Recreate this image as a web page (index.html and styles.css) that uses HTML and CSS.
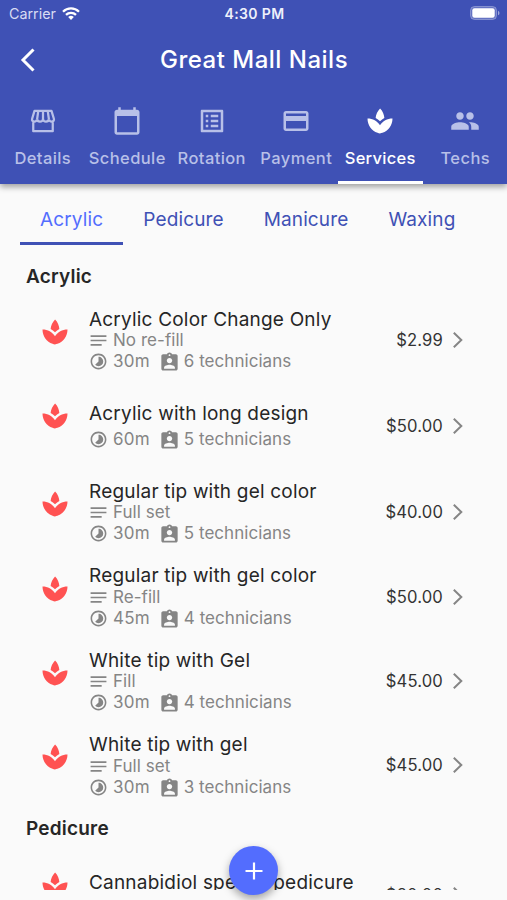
FILE: index.html
```html
<!DOCTYPE html>
<html lang="en">
<head>
<meta charset="utf-8">
<title>Great Mall Nails</title>
<link rel="stylesheet" href="styles.css">
</head>
<body>
<svg class="defs" aria-hidden="true">
  <symbol id="spa" viewBox="0 0 24 24"><path d="M15.49 9.63c-.18-2.79-1.31-5.51-3.43-7.63-2.14 2.14-3.32 4.86-3.55 7.63 1.28.68 2.46 1.56 3.49 2.63 1.03-1.06 2.21-1.94 3.49-2.63zM12 15.45C9.85 12.17 6.18 10 2 10c0 5.32 3.36 9.82 8.03 11.49.63.23 1.29.4 1.97.51.68-.12 1.33-.29 1.97-.51C18.64 19.82 22 15.32 22 10c-4.18 0-7.85 2.17-10 5.45z"/></symbol>
  <symbol id="notes" viewBox="0 0 24 24"><path d="M2 18.500h14v-2H2v2zM2 5.500v2h20v-2H2zm0 7.500h20v-2H2v2z"/></symbol>
  <symbol id="time" viewBox="0 0 24 24"><path d="M16.24 7.76C15.07 6.59 13.54 6 12 6v6l-4.24 4.24c2.34 2.34 6.14 2.34 8.49 0 2.34-2.34 2.34-6.14-.01-8.48zM12 2C6.48 2 2 6.48 2 12s4.48 10 10 10 10-4.48 10-10S17.52 2 12 2zm0 18c-4.42 0-8-3.58-8-8s3.58-8 8-8 8 3.58 8 8-3.58 8-8 8z"/></symbol>
  <symbol id="badge" viewBox="1.500 .5 21 21"><path d="M19 3h-4.180C14.400 1.840 13.300 1 12 1s-2.400.84-2.820 2H5c-1.100 0-2 .9-2 2v14c0 1.100.9 2 2 2h14c1.100 0 2-.9 2-2V5c0-1.100-.9-2-2-2zm-7 0c.55 0 1 .45 1 1s-.45 1-1 1-1-.45-1-1 .45-1 1-1zm0 4c1.660 0 3 1.340 3 3s-1.340 3-3 3-3-1.340-3-3 1.340-3 3-3zm6 12H6v-1.400c0-2 4-3.100 6-3.100s6 1.100 6 3.100V19z"/></symbol>
  <symbol id="next" viewBox="0 0 12 18"><path d="M1.800 1.800 9.300 9 1.800 16.200" fill="none" stroke="currentColor" stroke-width="2"/></symbol>
</svg>
<div class="app">
  <header class="appbar">
    <div class="status">
      <div class="carrier">Carrier
        <svg class="wifi" viewBox="0 0 18 13"><g fill="none" stroke="currentColor" stroke-width="2.3"><path d="M1 4.700a11.400 11.400 0 0 1 16 0"/><path d="M4 7.900a7.100 7.100 0 0 1 10 0"/></g><path fill="currentColor" d="M9 13 6.200 10.100a4 4 0 0 1 5.600 0z"/></svg>
      </div>
      <div class="clock">4:30 PM</div>
      <svg class="battery" viewBox="0 0 30 14"><rect x=".5" y=".5" width="26" height="13" rx="4" fill="#fff" fill-opacity=".2" stroke="#fff" stroke-opacity=".3"/><rect x="2.300" y="2.300" width="22.400" height="9.400" rx="2.200" fill="#fff"/><path d="M28 4.700a2.500 2.500 0 0 1 0 4.600z" fill="#fff" fill-opacity=".5"/></svg>
    </div>
    <div class="titlebar">
      <svg class="back" viewBox="0 0 16 24"><path d="M13.500 1.500 3 12l10.500 10.500" fill="none" stroke="currentColor" stroke-width="3"/></svg>
      <h1>Great Mall Nails</h1>
    </div>
    <nav class="tabs">
      <a class="tab"><svg viewBox="0 0 24 24"><path d="M5.200 3.900h13.600l1.900 6.300c.4 1.300-.5 2.300-1.600 2.300-1.200 0-2.200-.8-2.400-2-.1 1.200-1.100 2-2.300 2-1.300 0-2.400-1-2.400-2.200 0 1.200-1.100 2.200-2.400 2.200-1.200 0-2.200-.8-2.300-2-.2 1.200-1.200 2-2.400 2-1.100 0-2-1-1.600-2.300zM8.200 4l-.9 6.500M12 4v6.300M15.800 4l.9 6.500M4.200 12v8.100h15.600V12" fill="none" stroke="currentColor" stroke-width="1.800" stroke-linejoin="round"/></svg><span>Details</span></a>
      <a class="tab"><svg viewBox="0 0 24 24"><path d="M20 3h-1V1h-2v2H7V1H5v2H4c-1.100 0-2 .9-2 2v16c0 1.100.9 2 2 2h16c1.100 0 2-.9 2-2V5c0-1.100-.9-2-2-2zm0 18H4V8h16v13z"/></svg><span>Schedule</span></a>
      <a class="tab"><svg viewBox="0 0 24 24"><path d="M19 5v14H5V5h14m1.100-2H3.900c-.5 0-.9.4-.9.9v16.200c0 .4.4.9.9.9h16.200c.4 0 .9-.5.9-.9V3.900c0-.5-.5-.9-.9-.9zM11 7h6v2h-6V7zm0 4h6v2h-6v-2zm0 4h6v2h-6zM7 7h2v2H7zm0 4h2v2H7zm0 4h2v2H7z"/></svg><span>Rotation</span></a>
      <a class="tab"><svg viewBox="0 0 24 24"><path d="M20 4H4c-1.110 0-1.990.89-1.990 2L2 18c0 1.110.89 2 2 2h16c1.110 0 2-.89 2-2V6c0-1.110-.89-2-2-2zm0 14H4v-6h16v6zm0-10H4V6h16v2z"/></svg><span>Payment</span></a>
      <a class="tab active"><svg><use href="#spa"/></svg><span>Services</span></a>
      <a class="tab"><svg viewBox="0 0 24 24"><path d="M16 11c1.660 0 2.990-1.340 2.990-3S17.660 5 16 5c-1.660 0-3 1.340-3 3s1.340 3 3 3zm-8 0c1.660 0 2.990-1.340 2.990-3S9.660 5 8 5C6.340 5 5 6.340 5 8s1.340 3 3 3zm0 2c-2.330 0-7 1.170-7 3.500V19h14v-2.500c0-2.330-4.670-3.500-7-3.500zm8 0c-.29 0-.62.02-.97.05 1.160.84 1.970 1.970 1.970 3.450V19h6v-2.500c0-2.330-4.670-3.500-7-3.500z"/></svg><span>Techs</span></a>
    </nav>
  </header>
  <nav class="categories">
    <a class="category active">Acrylic</a>
    <a class="category">Pedicure</a>
    <a class="category">Manicure</a>
    <a class="category">Waxing</a>
  </nav>
  <main class="list">
    <h2>Acrylic</h2>
    <section class="row"><svg class="spa"><use href="#spa"/></svg><div class="info"><h3>Acrylic Color Change Only</h3><p><svg><use href="#notes"/></svg><span>No re-fill</span></p><p><svg><use href="#time"/></svg><span class="mins">30m</span><svg><use href="#badge"/></svg><span>6 technicians</span></p></div><span class="price">$2.99</span><svg class="next"><use href="#next"/></svg></section>
    <section class="row brief"><svg class="spa"><use href="#spa"/></svg><div class="info"><h3>Acrylic with long design</h3><p><svg><use href="#time"/></svg><span class="mins">60m</span><svg><use href="#badge"/></svg><span>5 technicians</span></p></div><span class="price">$50.00</span><svg class="next"><use href="#next"/></svg></section>
    <section class="row"><svg class="spa"><use href="#spa"/></svg><div class="info"><h3>Regular tip with gel color</h3><p><svg><use href="#notes"/></svg><span>Full set</span></p><p><svg><use href="#time"/></svg><span class="mins">30m</span><svg><use href="#badge"/></svg><span>5 technicians</span></p></div><span class="price">$40.00</span><svg class="next"><use href="#next"/></svg></section>
    <section class="row"><svg class="spa"><use href="#spa"/></svg><div class="info"><h3>Regular tip with gel color</h3><p><svg><use href="#notes"/></svg><span>Re-fill</span></p><p><svg><use href="#time"/></svg><span class="mins">45m</span><svg><use href="#badge"/></svg><span>4 technicians</span></p></div><span class="price">$50.00</span><svg class="next"><use href="#next"/></svg></section>
    <section class="row"><svg class="spa"><use href="#spa"/></svg><div class="info"><h3>White tip with Gel</h3><p><svg><use href="#notes"/></svg><span>Fill</span></p><p><svg><use href="#time"/></svg><span class="mins">30m</span><svg><use href="#badge"/></svg><span>4 technicians</span></p></div><span class="price">$45.00</span><svg class="next"><use href="#next"/></svg></section>
    <section class="row"><svg class="spa"><use href="#spa"/></svg><div class="info"><h3>White tip with gel</h3><p><svg><use href="#notes"/></svg><span>Full set</span></p><p><svg><use href="#time"/></svg><span class="mins">30m</span><svg><use href="#badge"/></svg><span>3 technicians</span></p></div><span class="price">$45.00</span><svg class="next"><use href="#next"/></svg></section>
    <h2>Pedicure</h2>
    <section class="row brief"><svg class="spa"><use href="#spa"/></svg><div class="info"><h3>Cannabidiol special pedicure</h3><p></p></div><span class="price">$80.00</span><svg class="next"><use href="#next"/></svg></section>
  </main>
  <button class="fab" aria-label="Add"><svg viewBox="0 0 24 24"><path d="M12 3.500v17M3.500 12h17" fill="none" stroke="#fff" stroke-width="2.200"/></svg></button>
</div>
</body>
</html>
```
FILE: styles.css
```css
* { box-sizing: border-box; }
body { margin: 0; background: #fafafa; font-family: Inter, "Liberation Sans", sans-serif; color: #262626; }
h1, h2, h3, p { margin: 0; font-weight: 400; }
svg { display: block; fill: currentColor; flex: none; }
.defs { position: absolute; width: 0; height: 0; }
.app { height: 900px; display: flex; flex-direction: column; overflow: hidden; position: relative; }

.appbar { height: 184px; flex: none; display: flex; flex-direction: column; background: #3f51b5; color: #fff; box-shadow: 0 3px 6px rgba(0, 0, 0, .36); z-index: 1; }
.status { height: 28px; display: grid; grid-template-columns: 1fr auto 1fr; align-items: center; padding: 0 7px 1px 9px; }
.carrier { display: flex; align-items: center; gap: 6px; font-size: 14.300px; color: #d8dcf3; }
.wifi { width: 18px; height: 13px; color: #fff; margin-top: -1px; }
.clock { font-size: 14px; font-weight: 600; letter-spacing: .35px; color: #eef0fb; }
.battery { width: 30px; height: 14px; justify-self: end; margin-top: -1px; }
.titlebar { height: 64px; display: grid; grid-template-columns: 60px 1fr 60px; align-items: center; }
.back { width: 16px; height: 24px; margin-left: 20px; }
h1 { padding-left: 1px; text-align: center; font-size: 24px; font-weight: 450; letter-spacing: .5px; line-height: 30px; }
.tabs { flex: 1; display: grid; grid-template-columns: repeat(6, 1fr); }
.tab { display: flex; flex-direction: column; align-items: center; padding: 15px 0 0 1px; border-bottom: 3px solid transparent; color: #b8c0e8; font-size: 16.500px; font-weight: 500; letter-spacing: .4px; white-space: nowrap; }
.tab svg { width: 30px; height: 30px; margin: -1px 0; }
.tab span { margin-top: 13px; line-height: 20px; }
.tab.active { padding-left: 0; color: #fff; border-color: #fff; }
.tab.active span { letter-spacing: .3px; }

.categories { height: 61px; flex: none; display: flex; padding-left: 20px; }
.category { padding: 23px 20px 0; border-bottom: 3px solid transparent; font-size: 19px; letter-spacing: .13px; line-height: 26px; color: #3f51b5; }
.category.active { color: #536dfe; border-color: #3f51b5; letter-spacing: .15px; }

.list { height: 645px; padding-top: 20px; overflow: hidden; }
h2 { height: 42px; margin-left: 26px; font-size: 19px; font-weight: 600; letter-spacing: .2px; line-height: 24px; }
.row { height: 84.400px; display: flex; align-items: center; padding: 0 43px 0 40px; }
h2 + .row { margin-top: -9px; }
.row + h2 { margin-top: 9.500px; height: 43px; }
.spa { width: 30px; height: 30px; margin: -16px 19px 0 0; color: #ff5252; }
.info { flex: 1; }
h3 { font-size: 19px; line-height: 22px; letter-spacing: .2px; white-space: nowrap; padding-top: 1px; height: 22.600px; }
.info p { display: flex; align-items: center; height: 21px; font-size: 17px; letter-spacing: .05px; color: #858585; }
.info p svg { width: 19px; height: 19px; margin-right: 5px; }
.info p span { line-height: 21px; }
.info .mins { margin-right: 10px; letter-spacing: .2px; }
.price { font-size: 16.600px; letter-spacing: .15px; color: #333; }
.next { width: 12px; height: 18px; margin-left: 9px; color: #858585; }
.brief { height: 87.600px; }
.brief p { margin-top: 4px; }
.brief .spa { margin-top: -20px; }
.fab { position: absolute; left: 229px; top: 846px; width: 49px; height: 49px; padding: 0; border: 0; border-radius: 50%; background: #536dfe; display: grid; place-items: center; box-shadow: 0 4px 8px rgba(0, 0, 0, .35); }
.fab svg { width: 24px; height: 24px; }
```
